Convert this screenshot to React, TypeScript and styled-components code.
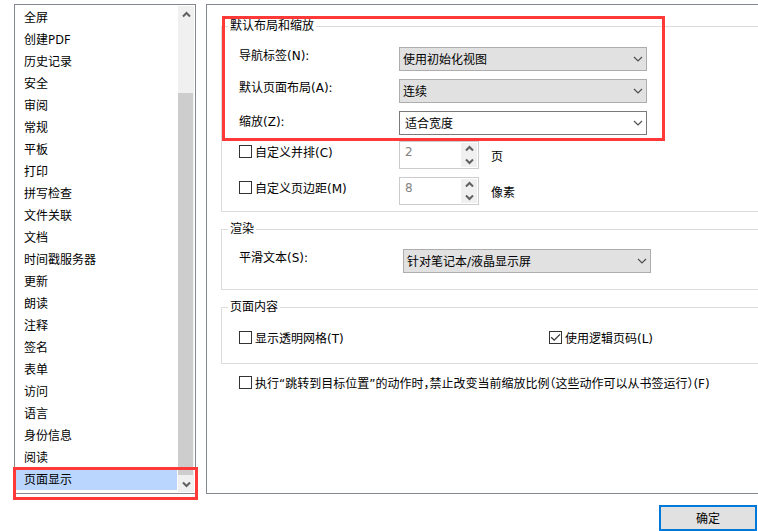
import React, { useState } from 'react';
import styled, { createGlobalStyle } from 'styled-components';

const GlobalStyle = createGlobalStyle`
  *, *::before, *::after { box-sizing: border-box; }
  body {
    margin: 0;
    background: #fff;
    color: #000;
    overflow: hidden;
    font: 12px/16px "DejaVu Sans", "Noto Sans CJK SC", sans-serif;
    font-feature-settings: "halt";
  }
  button, input, select { font: inherit; color: inherit; }
`;

const Page = styled.div`
  display: flex;
  flex-direction: column;
  gap: 11px;
  padding-top: 4px;
`;

const Columns = styled.div`
  display: flex;
  gap: 10px;
  padding-left: 14px;
`;

const Sidebar = styled.nav`
  position: relative;
  display: flex;
  flex: 0 0 182px;
  padding: 1px 1px 1px 0;
  border: 1px solid #828790;
`;

const CategoryList = styled.ul`
  flex: 1;
  margin: 0;
  padding: 1px 1px 1px 0;
  list-style: none;
`;

const Category = styled.button<{ $selected: boolean }>`
  display: block;
  width: 100%;
  height: 22px;
  padding: 0 0 0 9px;
  border: 0;
  border-top: 1px solid #fff;
  border-bottom: 1px solid #fff;
  background: ${(p) => (p.$selected ? '#bad6ff' : 'transparent')};
  font-family: "Noto Sans", "Noto Sans CJK SC", sans-serif;
  line-height: 20px;
  text-align: left;
`;

const ScrollBar = styled.div`
  display: flex;
  flex-direction: column;
  width: 16px;
  background: #f0f0f0;
`;

const ArrowButton = styled.button`
  display: flex;
  align-items: center;
  justify-content: center;
  height: 17px;
  padding: 0;
  border: 0;
  background: #f0f0f0;
`;

const Track = styled.div`
  flex: 70;
`;

const Thumb = styled.div`
  flex: 382;
  margin-right: 1px;
  background: #cdcdcd;
`;

const Highlight = styled.div`
  position: absolute;
  border: 3px solid #ff3838;
  pointer-events: none;
`;

const CategoryHighlight = styled(Highlight)`
  left: -2px;
  right: -3px;
  bottom: -7px;
  height: 33px;
`;

const LayoutHighlight = styled(Highlight)`
  left: 15px;
  top: 11px;
  width: 443px;
  height: 125px;
`;

const Panel = styled.main`
  position: relative;
  display: flex;
  flex: 1;
  flex-direction: column;
  gap: 8px;
  min-width: 0;
  padding: 12px 0 0 14px;
  border: 1px solid #828790;
  border-right: 0;
`;

const Group = styled.fieldset`
  min-width: 0;
  margin: 0;
  padding: 12px 0 6px 17px;
  border: 1px solid #dcdcdc;
  border-right: 0;
`;

const RenderGroup = styled(Group)`
  padding-top: 11px;
  padding-bottom: 16px;
`;

const ContentGroup = styled(Group)`
  display: grid;
  grid-template-columns: 310px 1fr;
  padding-top: 11px;
  padding-bottom: 12px;
`;

const GroupTitle = styled.legend`
  margin-left: -11px;
  padding: 0 2px;
  line-height: 18px;
`;

const Row = styled.div<{ $wide?: boolean }>`
  display: grid;
  grid-template-columns: ${(p) => (p.$wide ? 164 : 160)}px 248px;
  align-items: start;
`;

const Stack = styled.div`
  display: flex;
  flex-direction: column;
  gap: 8px;
  & + & { margin-top: 6px; }
`;

const FieldLabel = styled.label<{ $low?: boolean }>`
  line-height: ${(p) => (p.$low ? 22 : 18)}px;
`;

const Combo = styled.div`
  position: relative;
  display: flex;

  svg {
    position: absolute;
    top: 9px;
    right: 4px;
    pointer-events: none;
  }
`;

const Select = styled.select<{ $light?: boolean }>`
  width: 100%;
  height: 24px;
  padding: 1px 20px 0 ${(p) => (p.$light ? 5 : 3)}px;
  appearance: none;
  border: 1px solid ${(p) => (p.$light ? '#7a7a7a' : '#adadad')};
  border-radius: 0;
  background: ${(p) => (p.$light ? '#fff' : '#e1e1e1')};
`;

const CheckLabel = styled.label`
  display: flex;
  align-items: center;
  gap: 3px;
  line-height: 24px;
  white-space: nowrap;
`;

const FootCheck = styled.div`
  padding: 0 0 0 18px;
`;

const CheckBox = styled.span`
  position: relative;
  display: flex;
  flex: none;
  margin-bottom: 4px;

  input {
    width: 13px;
    height: 13px;
    margin: 0;
    appearance: none;
    border: 1px solid #333;
    background: #fff;
  }
  svg {
    position: absolute;
    inset: 0;
    pointer-events: none;
  }
`;

const NumberField = styled.div`
  display: flex;
  gap: 12px;
  height: 28px;
`;

const Spinner = styled.div`
  display: flex;
  width: 80px;
  height: 28px;
  padding: 1px;
  border: 1px solid #ccc;

  input {
    flex: 1;
    min-width: 0;
    height: 18px;
    padding: 0 0 0 4px;
    border: 0;
    background: transparent;
    color: #838383;
  }
`;

const SpinnerButtons = styled.div`
  display: flex;
  flex: 0 0 16px;
  flex-direction: column;

  button { height: 12px; }
`;

const Unit = styled.span`
  line-height: 32px;
`;

const Footer = styled.footer`
  display: flex;
  justify-content: flex-end;
  padding-right: 1px;
`;

const OkButton = styled.button`
  width: 98px;
  height: 26px;
  padding: 2px 0 0;
  border: 2px solid #0078d7;
  background: #e1e1e1;
`;

const categories = [
  '全屏', '创建PDF', '历史记录', '安全', '审阅', '常规', '平板', '打印',
  '拼写检查', '文件关联', '文档', '时间戳服务器', '更新', '朗读', '注释',
  '签名', '表单', '访问', '语言', '身份信息', '阅读', '页面显示',
];

function Chevron({ up }: { up?: boolean }) {
  return (
    <svg width="9" height="8" viewBox="0 0 9 8" aria-hidden="true">
      <path d={up ? 'M1 5.5 4.5 2 8 5.5' : 'M1 2.5 4.5 6 8 2.5'} fill="none" stroke="#606060" strokeWidth="2" />
    </svg>
  );
}

interface ComboRowProps {
  id: string;
  label: string;
  options: string[];
  light?: boolean;
  wide?: boolean;
}

function ComboRow({ id, label, options, light, wide }: ComboRowProps) {
  return (
    <Row $wide={wide}>
      <FieldLabel htmlFor={id} $low={light}>{label}</FieldLabel>
      <Combo>
        <Select id={id} $light={light}>
          {options.map((o) => <option key={o}>{o}</option>)}
        </Select>
        <svg width="10" height="7" viewBox="0 0 10 7" aria-hidden="true">
          <path d="M1 1 5 5 9 1" fill="none" stroke="#505050" strokeWidth="1.2" />
        </svg>
      </Combo>
    </Row>
  );
}

function Check({ label, initial = false }: { label: string; initial?: boolean }) {
  const [checked, setChecked] = useState(initial);
  return (
    <CheckLabel>
      <CheckBox>
        <input type="checkbox" checked={checked} onChange={() => setChecked(!checked)} />
        {checked && (
          <svg width="13" height="13" viewBox="0 0 13 13" aria-hidden="true">
            <path d="M2.2 6.2 5.2 9.2 11 3.4" fill="none" stroke="#333" strokeWidth="1.3" />
          </svg>
        )}
      </CheckBox>
      {label}
    </CheckLabel>
  );
}

function SpinnerRow({ label, value, unit }: { label: string; value: string; unit: string }) {
  return (
    <Row>
      <Check label={label} />
      <NumberField>
        <Spinner>
          <input type="text" defaultValue={value} aria-label={label} disabled />
          <SpinnerButtons>
            <ArrowButton type="button" aria-label="增加" disabled><Chevron up /></ArrowButton>
            <ArrowButton type="button" aria-label="减少" disabled><Chevron /></ArrowButton>
          </SpinnerButtons>
        </Spinner>
        <Unit>{unit}</Unit>
      </NumberField>
    </Row>
  );
}

export default function App() {
  const [selected, setSelected] = useState('页面显示');
  return (
    <Page>
      <GlobalStyle />
      <Columns>
        <Sidebar>
          <CategoryList>
            {categories.map((c) => (
              <li key={c}>
                <Category type="button" $selected={c === selected} onClick={() => setSelected(c)}>{c}</Category>
              </li>
            ))}
          </CategoryList>
          <ScrollBar>
            <ArrowButton type="button" aria-label="向上滚动"><Chevron up /></ArrowButton>
            <Track />
            <Thumb />
            <ArrowButton type="button" aria-label="向下滚动"><Chevron /></ArrowButton>
          </ScrollBar>
          <CategoryHighlight />
        </Sidebar>
        <Panel>
          <Group>
            <GroupTitle>默认布局和缩放</GroupTitle>
            <Stack>
              <ComboRow id="nav-tab" label="导航标签(N):" options={['使用初始化视图']} />
              <ComboRow id="page-layout" label="默认页面布局(A):" options={['连续', '单页']} />
              <ComboRow id="zoom" label="缩放(Z):" options={['适合宽度', '适合页面']} light />
            </Stack>
            <Stack>
              <SpinnerRow label="自定义并排(C)" value="2" unit="页" />
              <SpinnerRow label="自定义页边距(M)" value="8" unit="像素" />
            </Stack>
          </Group>
          <RenderGroup>
            <GroupTitle>渲染</GroupTitle>
            <ComboRow id="smooth" label="平滑文本(S):" options={['针对笔记本/液晶显示屏']} wide />
          </RenderGroup>
          <ContentGroup>
            <GroupTitle>页面内容</GroupTitle>
            <Check label="显示透明网格(T)" />
            <Check label="使用逻辑页码(L)" initial />
          </ContentGroup>
          <FootCheck>
            <Check label="执行“跳转到目标位置”的动作时，禁止改变当前缩放比例（这些动作可以从书签运行）(F)" />
          </FootCheck>
          <LayoutHighlight />
        </Panel>
      </Columns>
      <Footer>
        <OkButton type="button">确定</OkButton>
      </Footer>
    </Page>
  );
}
